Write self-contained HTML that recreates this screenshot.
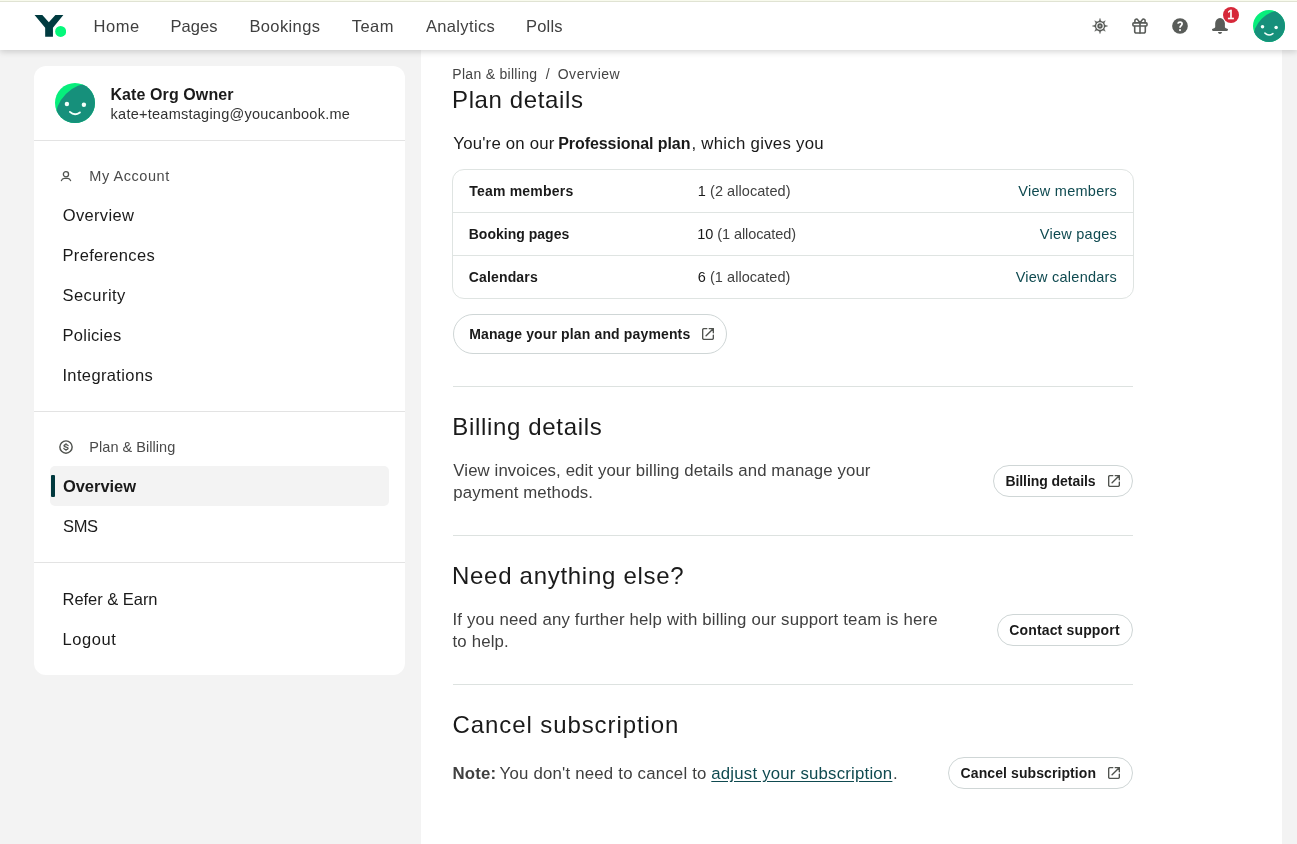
<!DOCTYPE html>
<html lang="en">
<head>
<meta charset="utf-8">
<title>Plan &amp; billing - Overview</title>
<style>
*{box-sizing:border-box;margin:0;padding:0}
html,body{width:1297px;height:844px;overflow:hidden}
body{background:#f3f3f3;font-family:"Liberation Sans",sans-serif;color:#1a1a1a;position:relative}
a{text-decoration:none;color:inherit}
svg{display:block}
.topbar,.side,.main{will-change:transform}

/* header */
.topbar{position:absolute;left:0;top:0;width:1297px;height:50px;background:#fff;border-top:1px solid #f8faed;box-shadow:0 2px 6px rgba(0,0,0,.16);z-index:5}
.topbar:before{content:"";position:absolute;left:0;top:0;width:100%;height:1px;background:#e0e3d3}
.logo{position:absolute;left:34px;top:14px}
.nav a{position:absolute;top:15px;height:20px;line-height:20px;font-size:16.5px;color:#404040;white-space:nowrap}
.ticon{position:absolute;top:17px;width:16px;height:16px}
.badge{position:absolute;left:1223px;top:6px;width:16px;height:16px;border-radius:8px;background:#d62839;color:#fff;font-size:12.5px;-webkit-text-stroke:.55px #fff;line-height:16px;text-align:center;text-indent:-.5px}
.avatar{position:absolute;border-radius:50%;overflow:hidden;background:#07ee7c}

/* sidebar */
.side{position:absolute;left:34px;top:66px;width:371px;height:609px;background:#fff;border-radius:12px}
.side .t{position:absolute;white-space:nowrap;height:20px;line-height:20px}
.side .name{left:77px;font-weight:bold;font-size:16px;color:#1a1a1a}
.side .mail{left:77px;font-size:14.5px;color:#333}
.side .hr{position:absolute;left:0;width:371px;height:1px;background:#e3e3e3}
.side .lab{left:56px;font-size:14.5px;color:#4a4a4a}
.side .it{left:29px;font-size:16.5px;color:#1a1a1a}
.side .act{position:absolute;left:16px;top:400px;width:339px;height:40px;background:#f3f3f3;border-radius:5px}
.side .act:before{content:"";position:absolute;left:1px;top:9px;width:4px;height:22px;background:#00383d;border-radius:1px}
.side .ic{position:absolute}

/* main */
.main{position:absolute;left:421px;top:50px;width:861px;height:794px;background:#fff}
.main .t{position:absolute;white-space:nowrap;line-height:22px}
.crumb{left:32px;font-size:14px;color:#444}
.h{left:32px;font-size:24px;color:#1a1a1a;line-height:30px !important}
.p{left:32px;font-size:16.8px;color:#404040}
.p b{color:#1a1a1a}
.tbl{position:absolute;left:31px;top:119px;width:682px;height:130px;border:1px solid #dfe4e2;border-radius:12px}
.tbl .row{position:relative;height:43px;border-top:1px solid #dfe4e2}
.tbl .row:first-child{height:42px;border-top:0}
.tbl .row:last-child{height:42px}
.tbl .row span{position:absolute;top:10px;line-height:22px;font-size:14.5px;white-space:nowrap}
.tbl .row .k{left:15px;font-weight:bold;color:#1a1a1a;font-size:14px}
.tbl .row .v{left:244px;color:#404040}
.tbl .v i{font-style:normal;color:#1a1a1a}
.tbl .row .l{right:15px;color:#0f4a50}
.hr2{position:absolute;left:32px;width:680px;height:1px;background:#dde2e0}
.btn{position:absolute;border:1px solid #cfd6d6;border-radius:20px;background:#fff;font-weight:bold;font-size:14px;color:#1a1a1a;white-space:nowrap}
.btn span{position:absolute;line-height:20px}
.btn svg{position:absolute}
u{text-decoration:underline;color:#0f4a50;text-underline-offset:2px}
/*AUTO*/
#n1{letter-spacing:0.58px;margin-left:-0.6px}
#n2{letter-spacing:0.09px;margin-left:-0.6px}
#n3{letter-spacing:0.38px;margin-left:-0.6px}
#n4{letter-spacing:0.42px;margin-left:-0.2px}
#n5{letter-spacing:0.36px;margin-left:0.9px}
#n6{letter-spacing:0.20px;margin-left:-0.0px}
#s1{letter-spacing:0.10px;margin-left:-0.6px}
#s2{letter-spacing:0.25px;margin-left:-0.4px}
#s3{letter-spacing:0.55px;margin-left:-0.7px}
#s4{letter-spacing:0.34px;margin-left:-0.3px}
#s5{letter-spacing:0.32px;margin-left:-0.5px}
#s6{letter-spacing:0.46px;margin-left:-0.5px}
#s7{letter-spacing:0.26px;margin-left:-0.5px}
#s8{letter-spacing:0.37px;margin-left:-0.6px}
#s9{letter-spacing:0.04px;margin-left:-0.7px}
#s10{letter-spacing:-0.03px;margin-left:-0.1px}
#s11{letter-spacing:-0.28px;margin-left:-0.1px}
#s12{letter-spacing:-0.03px;margin-left:-0.5px}
#s13{letter-spacing:0.56px;margin-left:-0.5px}
#c1{letter-spacing:0.29px;margin-left:-0.7px}
#c2{letter-spacing:0.00px;margin-left:0.7px}
#c3{letter-spacing:0.52px;margin-left:-0.3px}
#h1{letter-spacing:0.62px;margin-left:-1.0px}
#p1{letter-spacing:0.20px;margin-left:0.3px}
#p1b{letter-spacing:-0.07px;margin-left:-0.8px}
#p1c{letter-spacing:0.27px;margin-left:-1.5px}
#k1{letter-spacing:0.20px;margin-left:1.3px}
#k2{letter-spacing:0.02px;margin-left:0.7px}
#k3{letter-spacing:0.15px;margin-left:0.8px}
#v1{letter-spacing:0.06px;margin-left:0.8px}
#v2{letter-spacing:-0.08px;margin-left:0.3px}
#v3{letter-spacing:0.06px;margin-left:0.7px}
#l1{letter-spacing:0.27px;margin-right:0.9px}
#l2{letter-spacing:0.26px;margin-right:0.9px}
#l3{letter-spacing:0.24px;margin-right:0.9px}
#b1{letter-spacing:0.14px;margin-left:-0.8px}
#b2{letter-spacing:-0.06px;margin-left:-0.6px}
#b3{letter-spacing:0.16px;margin-left:-0.8px}
#b4{letter-spacing:0.09px;margin-left:-0.4px}
#h2{letter-spacing:0.66px;margin-left:-0.7px}
#p2{letter-spacing:0.11px;margin-left:0.3px}
#h3{letter-spacing:0.71px;margin-left:-1.0px}
#p3{letter-spacing:0.19px;margin-left:-0.6px}
#h4{letter-spacing:0.91px;margin-left:-0.5px}
#p4{letter-spacing:0.16px;margin-left:-0.5px}
#p4b{letter-spacing:0.21px;margin-left:-0.4px}
#p4c{letter-spacing:0.20px;margin-left:0.3px}
#p4d{letter-spacing:0.00px;margin-left:-1.0px}
/*END*/
</style>
</head>
<body>

<div class="topbar">
  <svg class="logo" width="32" height="24" viewBox="0 0 32 24">
    <path d="M.55 .12H8.320L14.840 7.320L21.400 .12H29.360L18.940 12.820V21.730H11.170V12.820Z" fill="#003b40"/>
    <circle cx="26.640" cy="16.420" r="5.500" fill="#05f87b"/>
  </svg>
  <nav class="nav">
    <a id="n1" style="left:94px">Home</a>
    <a id="n2" style="left:171px">Pages</a>
    <a id="n3" style="left:250px">Bookings</a>
    <a id="n4" style="left:352px">Team</a>
    <a id="n5" style="left:425px">Analytics</a>
    <a id="n6" style="left:526px">Polls</a>
  </nav>
  <!-- theme / sun -->
  <svg class="ticon" style="left:1092px" viewBox="0 0 16 16">
    <path d="M9.00 3.20L8.00 0.20L7.00 3.20ZM12.10 5.31L13.34 2.66L10.69 3.90ZM12.80 9.00L15.80 8.00L12.80 7.00ZM10.69 12.10L13.34 13.34L12.10 10.69ZM7.00 12.80L8.00 15.80L9.00 12.80ZM3.90 10.69L2.66 13.34L5.31 12.10ZM3.20 7.00L0.20 8.00L3.20 9.00ZM5.31 3.90L2.66 2.66L3.90 5.31Z" fill="#595c59" stroke="#595c59" stroke-width=".3" stroke-linejoin="round"/>
    <circle cx="8" cy="8" r="4.5" fill="none" stroke="#595c59" stroke-width="1.35"/>
    <circle cx="8" cy="8" r="2.7" fill="#595c59"/>
    <circle cx="8" cy="8" r="1.05" fill="#b4b6b4"/>
  </svg>
  <!-- gift -->
  <svg class="ticon" style="left:1132px" viewBox="0 0 16 16" fill="none" stroke="#595c59" stroke-width="1.6" stroke-linejoin="round" stroke-linecap="round">
    <rect x=".9" y="4.9" width="14.1" height="3.1" rx=".9"/>
    <path d="M2.700 8.200v5.300a1.500 1.500 0 0 0 1.500 1.500h7.600a1.500 1.500 0 0 0 1.500-1.500V8.200"/>
    <path d="M8 4.900V15"/>
    <path d="M8 4.700L5.700 1.700A1.550 1.550 0 0 0 2.900 2.700V4.700M8 4.700L10.300 1.700A1.550 1.550 0 0 1 13.100 2.700V4.700"/>
  </svg>
  <!-- help -->
  <svg class="ticon" style="left:1172px" viewBox="0 0 16 16">
    <circle cx="8" cy="8" r="7.850" fill="#595c59"/>
    <path d="M5.900 5.700C6.100 4.600 7 4.100 8.100 4.100C9.300 4.100 10.100 4.800 10.100 5.800C10.100 7.500 8 7.600 8 9.700" fill="none" stroke="#fff" stroke-width="1.75"/>
    <rect x="7.050" y="11.100" width="1.950" height="1.950" fill="#e6e6e6"/>
  </svg>
  <!-- bell -->
  <svg class="ticon" style="left:1212px" viewBox="0 0 16 16" fill="#595c59">
    <path d="M8 0C5.200 .4 3.200 2.600 3.200 5.300V8.800C3.200 9.800 2.600 10.200 1.300 10.500C.4 10.700 0 11.200 0 11.750C0 12.450 .5 12.900 1.300 12.900H14.700C15.500 12.900 16 12.450 16 11.750C16 11.200 15.600 10.700 14.700 10.500C13.400 10.200 12.900 9.800 12.900 8.800V5.300C12.900 2.600 10.800 .4 8 0Z"/>
    <path d="M5.900 13.900H10.100C9.800 15.200 9 15.900 8 15.900C7 15.900 6.200 15.200 5.900 13.900Z"/>
  </svg>
  <div class="badge">1</div>
  <div class="avatar" style="left:1253px;top:9px;width:32px;height:32px">
    <svg width="32" height="32" viewBox="0 0 40 40">
      <circle cx="37.200" cy="37.200" r="37.200" fill="#16907b"/>
      <circle cx="11.900" cy="21" r="2.200" fill="#f4fffa"/>
      <circle cx="28.900" cy="21.800" r="2.200" fill="#f4fffa"/>
      <path d="M14.900 28.900Q19.600 33.300 24.900 29.400" fill="none" stroke="#f4fffa" stroke-width="1.900" stroke-linecap="round"/>
    </svg>
  </div>
</div>

<aside class="side">
  <div class="avatar" style="left:21px;top:17px;width:40px;height:40px">
    <svg width="40" height="40" viewBox="0 0 40 40">
      <circle cx="37.200" cy="37.200" r="37.200" fill="#16907b"/>
      <circle cx="11.900" cy="21" r="2.200" fill="#f4fffa"/>
      <circle cx="28.900" cy="21.800" r="2.200" fill="#f4fffa"/>
      <path d="M14.900 28.900Q19.600 33.300 24.900 29.400" fill="none" stroke="#f4fffa" stroke-width="1.900" stroke-linecap="round"/>
    </svg>
  </div>
  <div id="s1" class="t name" style="top:19px">Kate Org Owner</div>
  <div id="s2" class="t mail" style="top:38px">kate+teamstaging@youcanbook.me</div>
  <div class="hr" style="top:74px"></div>

  <svg class="ic" style="left:26px;top:104px" width="12" height="12" viewBox="0 0 12 12" fill="none" stroke="#50534f" stroke-width="1.300" stroke-linecap="round">
    <circle cx="5.950" cy="4.250" r="2.600"/>
    <path d="M1.400 10.600C1.900 9.200 2.800 8.450 4.300 8.450H7.700C9.200 8.450 10.100 9.200 10.600 10.600"/>
  </svg>
  <div id="s3" class="t lab" style="top:100px">My Account</div>
  <div id="s4" class="t it" style="top:139px">Overview</div>
  <div id="s5" class="t it" style="top:179px">Preferences</div>
  <div id="s6" class="t it" style="top:219px">Security</div>
  <div id="s7" class="t it" style="top:259px">Policies</div>
  <div id="s8" class="t it" style="top:299px">Integrations</div>
  <div class="hr" style="top:345px"></div>

  <svg class="ic" style="left:25px;top:374px" width="14" height="14" viewBox="0 0 14 14" fill="none" stroke="#50534f" stroke-width="1.450">
    <circle cx="7" cy="7" r="6.150"/>
    <path d="M9.100 5.600C8.900 4.900 8.100 4.550 7.100 4.550C5.900 4.550 5 5 5 5.800C5 7.500 9.100 6.600 9.100 8.300C9.100 9.100 8.200 9.550 7 9.550C5.900 9.550 5.100 9.200 4.850 8.400" stroke-width="1.300" stroke-linecap="round"/>
    <path d="M7 3.250V4.500M7 9.600V10.850" stroke-width="1.300"/>
  </svg>
  <div id="s9" class="t lab" style="top:371px">Plan &amp; Billing</div>
  <div class="act"></div>
  <div id="s10" class="t it" style="top:410px;font-weight:bold">Overview</div>
  <div id="s11" class="t it" style="top:450px">SMS</div>
  <div class="hr" style="top:496px"></div>
  <div id="s12" class="t it" style="top:523px">Refer &amp; Earn</div>
  <div id="s13" class="t it" style="top:563px">Logout</div>
</aside>

<main class="main">
  <div id="c1" class="t crumb" style="top:13px">Plan &amp; billing</div>
  <div id="c2" class="t crumb" style="top:13px;left:124px">/</div>
  <div id="c3" class="t crumb" style="top:13px;left:137px">Overview</div>
  <div id="h1" class="t h" style="top:35px">Plan details</div>
  <div id="p1" class="t p" style="top:83px;color:#1a1a1a">You're on our</div>
  <div id="p1b" class="t p" style="top:83px;left:138px;color:#1a1a1a;font-weight:bold;font-size:16px">Professional plan</div>
  <div id="p1c" class="t p" style="top:83px;left:272px;color:#1a1a1a">, which gives you</div>

  <div class="tbl">
    <div class="row"><span id="k1" class="k">Team members</span><span id="v1" class="v"><i>1</i> (2 allocated)</span><span id="l1" class="l">View members</span></div>
    <div class="row"><span id="k2" class="k">Booking pages</span><span id="v2" class="v"><i>10</i> (1 allocated)</span><span id="l2" class="l">View pages</span></div>
    <div class="row"><span id="k3" class="k">Calendars</span><span id="v3" class="v"><i>6</i> (1 allocated)</span><span id="l3" class="l">View calendars</span></div>
  </div>

  <div class="btn" style="left:32px;top:264px;width:274px;height:40px">
    <span id="b1" style="left:16px;top:9px">Manage your plan and payments</span>
    <svg style="left:248px;top:13px" width="12" height="12" viewBox="0 0 12 12" fill="none" stroke="#50534f" stroke-width="1.400" stroke-linecap="round" stroke-linejoin="round"><path d="M4.700 .65H1.950a1.300 1.300 0 0 0-1.300 1.300V10.050a1.300 1.300 0 0 0 1.300 1.300H10.050a1.300 1.300 0 0 0 1.300-1.300V7.100M7.300 .65H11.350V4.700M11.200 .8L4.100 7.700"/></svg>
  </div>
  <div class="hr2" style="top:336px"></div>

  <div id="h2" class="t h" style="top:362px">Billing details</div>
  <div id="p2" class="t p" style="top:410px">View invoices, edit your billing details and manage your<br>payment methods.</div>
  <div class="btn" style="left:572px;top:415px;width:140px;height:32px">
    <span id="b2" style="left:12px;top:5px">Billing details</span>
    <svg style="left:114px;top:9px" width="12" height="12" viewBox="0 0 12 12" fill="none" stroke="#50534f" stroke-width="1.400" stroke-linecap="round" stroke-linejoin="round"><path d="M4.700 .65H1.950a1.300 1.300 0 0 0-1.300 1.300V10.050a1.300 1.300 0 0 0 1.300 1.300H10.050a1.300 1.300 0 0 0 1.300-1.300V7.100M7.300 .65H11.350V4.700M11.200 .8L4.100 7.700"/></svg>
  </div>
  <div class="hr2" style="top:485px"></div>

  <div id="h3" class="t h" style="top:511px">Need anything else?</div>
  <div id="p3" class="t p" style="top:559px">If you need any further help with billing our support team is here<br>to help.</div>
  <div class="btn" style="left:576px;top:564px;width:136px;height:32px">
    <span id="b3" style="left:12px;top:5px">Contact support</span>
  </div>
  <div class="hr2" style="top:634px"></div>

  <div id="h4" class="t h" style="top:660px">Cancel subscription</div>
  <div id="p4" class="t p" style="top:713px;font-weight:bold">Note:</div>
  <div id="p4b" class="t p" style="top:713px;left:79px">You don't need to cancel to</div>
  <div id="p4c" class="t p" style="top:713px;left:290px"><u>adjust your subscription</u></div>
  <div id="p4d" class="t p" style="top:713px;left:473px">.</div>
  <div class="btn" style="left:527px;top:707px;width:185px;height:32px">
    <span id="b4" style="left:12px;top:5px">Cancel subscription</span>
    <svg style="left:159px;top:9px" width="12" height="12" viewBox="0 0 12 12" fill="none" stroke="#50534f" stroke-width="1.400" stroke-linecap="round" stroke-linejoin="round"><path d="M4.700 .65H1.950a1.300 1.300 0 0 0-1.300 1.300V10.050a1.300 1.300 0 0 0 1.300 1.300H10.050a1.300 1.300 0 0 0 1.300-1.300V7.100M7.300 .65H11.350V4.700M11.200 .8L4.100 7.700"/></svg>
  </div>
</main>

</body>
</html>
